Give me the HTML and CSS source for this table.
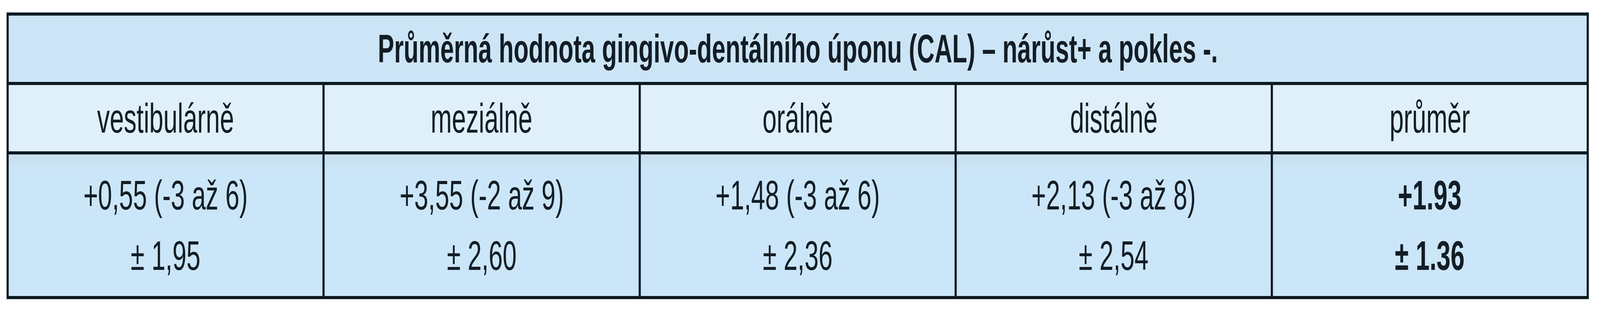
FILE: index.html
```html
<!DOCTYPE html>
<html lang="cs">
<head>
<meta charset="utf-8">
<title>Průměrná hodnota gingivo-dentálního úponu (CAL)</title>
<link rel="stylesheet" href="styles.css">
</head>
<body>
<div class="frame">
<main class="sheet">
<table class="cal">
  <tr class="title-row">
    <th colspan="5"><span class="t">Průměrná hodnota gingivo-dentálního úponu (CAL) – nárůst+ a pokles -.</span></th>
  </tr>
  <tr class="head-row">
    <td><span class="t">vestibulárně</span></td>
    <td><span class="t">meziálně</span></td>
    <td><span class="t">orálně</span></td>
    <td><span class="t">distálně</span></td>
    <td><span class="t">průměr</span></td>
  </tr>
  <tr class="data-row">
    <td><span class="t">+0,55 (-3 až 6)<br>± 1,95</span></td>
    <td><span class="t">+3,55 (-2 až 9)<br>± 2,60</span></td>
    <td><span class="t">+1,48 (-3 až 6)<br>± 2,36</span></td>
    <td><span class="t">+2,13 (-3 až 8)<br>± 2,54</span></td>
    <td class="strong"><span class="t">+1.93<br>± 1.36</span></td>
  </tr>
</table>
</main>
</div>
<script src="app.js"></script>
</body>
</html>
```
FILE: styles.css
```css
:root {
  --sx: 0.69719;
}

html, body {
  margin: 0;
  padding: 0;
  background: #ffffff;
}

body {
  font-family: "Liberation Sans", Arial, sans-serif;
  color: #131d25;
}

/* clips the un-transformed layout box so nothing spills past the window */
.frame {
  width: 100vw;
  height: 800px;
  overflow: hidden;
}

/* the sheet is laid out at the reference width (5875px) and fitted to the viewport width */
.sheet {
  box-sizing: border-box;
  width: 5875px;
  padding: 32px 0 0 24px;
  transform-origin: 0 0;
  transform: scaleX(var(--sx));
}

.cal {
  width: 5810px;
  table-layout: fixed;
  border-collapse: separate;
  border-spacing: 8px;
  background: #0d1a22;
}

.cal th,
.cal td {
  padding: 0;
  text-align: center;
  vertical-align: middle;
}

/* narrow letterforms, like the condensed face of the original */
.t {
  display: inline-block;
  transform: scaleX(0.88);
  transform-origin: 50% 50%;
  white-space: nowrap;
}

.title-row th {
  height: 170px;
  background: #cce5f6;
  font-size: 102px;
  font-weight: bold;
  line-height: 120px;
}

.head-row td {
  height: 170px;
  background: #dff0fb;
  font-size: 106px;
  font-weight: normal;
  line-height: 120px;
}

.data-row td {
  height: 363px;
  background: linear-gradient(#c9e0ee 0px, #cbe6f8 40px, #cbe6f8 100%);
  font-size: 105px;
  line-height: 155px;
}

.data-row td.strong {
  font-weight: bold;
}
```
FILE: app.js
```js
// fit the 5875px-wide sheet to the actual viewport width
document.documentElement.style.setProperty('--sx', String(window.innerWidth / 5875));
```
